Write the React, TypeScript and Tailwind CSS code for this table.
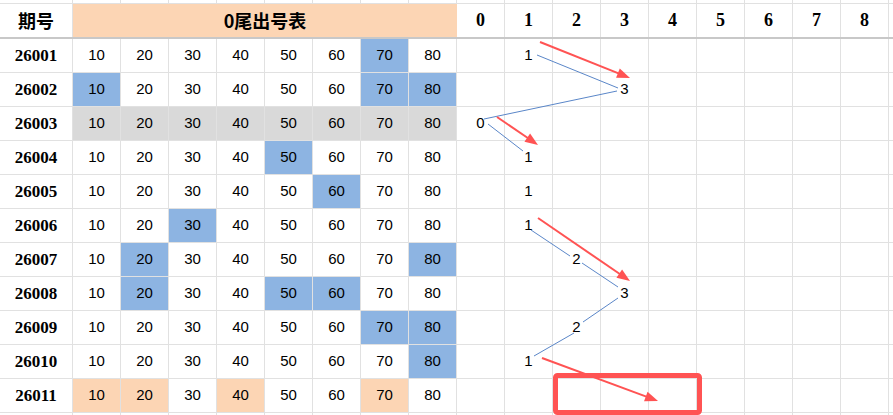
import React from "react"

const vals = [10, 20, 30, 40, 50, 60, 70, 80]
const digits = [0, 1, 2, 3, 4, 5, 6, 7, 8]

type Row = { id: string; blue?: number[]; peach?: number[]; gray?: boolean; d?: number }

const rows: Row[] = [
  { id: "26001", blue: [70], d: 1 },
  { id: "26002", blue: [10, 70, 80], d: 3 },
  { id: "26003", gray: true, d: 0 },
  { id: "26004", blue: [50], d: 1 },
  { id: "26005", blue: [60], d: 1 },
  { id: "26006", blue: [30], d: 1 },
  { id: "26007", blue: [20, 80], d: 2 },
  { id: "26008", blue: [20, 50, 60], d: 3 },
  { id: "26009", blue: [70, 80], d: 2 },
  { id: "26010", blue: [80], d: 1 },
  { id: "26011", peach: [10, 20, 40, 70] },
]

const line = "border-r border-b border-[#e1e1e1]"

function Arrow({ x1, y1, x2, y2 }: { x1: number; y1: number; x2: number; y2: number }) {
  const dx = x2 - x1
  const dy = y2 - y1
  const len = Math.hypot(dx, dy)
  const ux = dx / len
  const uy = dy / len
  const hl = 13
  const hw = 5
  const bx = x2 - ux * hl
  const by = y2 - uy * hl
  const pts = `${x2},${y2} ${bx - uy * hw},${by + ux * hw} ${bx + uy * hw},${by - ux * hw}`
  return (
    <g>
      <line x1={x1} y1={y1} x2={bx + ux * 2} y2={by + uy * 2} stroke="#ff5353" strokeWidth={2} />
      <polygon points={pts} fill="#ff5353" />
    </g>
  )
}

function Overlay() {
  const blue = [
    [537, 55, 618, 88],
    [617, 91, 484, 119],
    [488, 124, 523, 151],
    [531, 230, 570, 256],
    [582, 263, 618, 287],
    [618, 298, 583, 322],
    [574, 333, 534, 356],
  ]
  return (
    <svg className="pointer-events-none absolute left-0 top-0" width={893} height={415} viewBox="0 0 893 415">
      {blue.map(([a, b, c, d], i) => (
        <line key={i} x1={a} y1={b} x2={c} y2={d} stroke="#5a86c8" strokeWidth={1} />
      ))}
      <Arrow x1={540} y1={42} x2={630} y2={78} />
      <Arrow x1={497} y1={117} x2={538} y2={145} />
      <Arrow x1={538} y1={218} x2={630} y2={281} />
      <Arrow x1={542} y1={358} x2={658} y2={401} />
      <rect x={555.5} y={375.5} width={144} height={37} rx={2} fill="none" stroke="#ff5353" strokeWidth={5} />
    </svg>
  )
}

export default function App() {
  return (
    <div className="relative h-[415px] w-[893px] overflow-hidden bg-white text-black">
      {/* strip of the row above */}
      <div className="flex h-[4px]">
        <div className={`w-[73px] shrink-0 ${line}`} />
        {[...vals, ...digits].map((v, i) => (
          <div key={i} className={`w-[48px] shrink-0 ${line}`} />
        ))}
        <div className="flex-1 border-b border-[#e1e1e1]" />
      </div>

      {/* header */}
      <div className="flex h-[35px] border-b-2 border-[#c8c8c8] font-bold">
        <div
          className="flex w-[73px] shrink-0 items-center justify-center border-r border-[#e1e1e1] text-[18px]"
          style={{ fontFamily: '"Noto Sans CJK SC", sans-serif' }}
        >
          期号
        </div>
        <div
          className="flex w-[384px] shrink-0 items-center justify-center bg-[#fcd5b4] text-[18px]"
          style={{ fontFamily: '"Noto Sans CJK SC", sans-serif' }}
        >
          0尾出号表
        </div>
        {digits.map((d) => (
          <div
            key={d}
            className="flex w-[48px] shrink-0 items-center justify-center border-r border-[#e1e1e1] font-['Liberation_Serif',serif] text-[18px]"
          >
            {d}
          </div>
        ))}
        <div className="flex-1" />
      </div>

      {/* data rows */}
      {rows.map((r) => (
        <div key={r.id} className="flex h-[34px]">
          <div className={`flex w-[73px] shrink-0 items-center justify-center font-['Liberation_Serif',serif] text-[17px] font-bold ${line}`}>
            {r.id}
          </div>
          {vals.map((v) => {
            const bg = r.gray
              ? "bg-[#d9d9d9]"
              : r.blue?.includes(v)
                ? "bg-[#8db4e2]"
                : r.peach?.includes(v)
                  ? "bg-[#fcd5b4]"
                  : "bg-white"
            return (
              <div
                key={v}
                className={`flex w-[48px] shrink-0 items-center justify-center font-['Liberation_Sans',sans-serif] text-[15px] ${line} ${bg}`}
              >
                {v}
              </div>
            )
          })}
          {digits.map((d) => (
            <div
              key={d}
              className={`flex w-[48px] shrink-0 items-center justify-center font-['Liberation_Sans',sans-serif] text-[15px] ${line}`}
            >
              {r.d === d ? d : ""}
            </div>
          ))}
          <div className="flex-1 border-b border-[#e1e1e1]" />
        </div>
      ))}

      <div className="flex h-[10px]">
        <div className={`w-[73px] shrink-0 ${line}`} />
        {[...vals, ...digits].map((v, i) => (
          <div key={i} className={`w-[48px] shrink-0 ${line}`} />
        ))}
      </div>

      <Overlay />
    </div>
  )
}
